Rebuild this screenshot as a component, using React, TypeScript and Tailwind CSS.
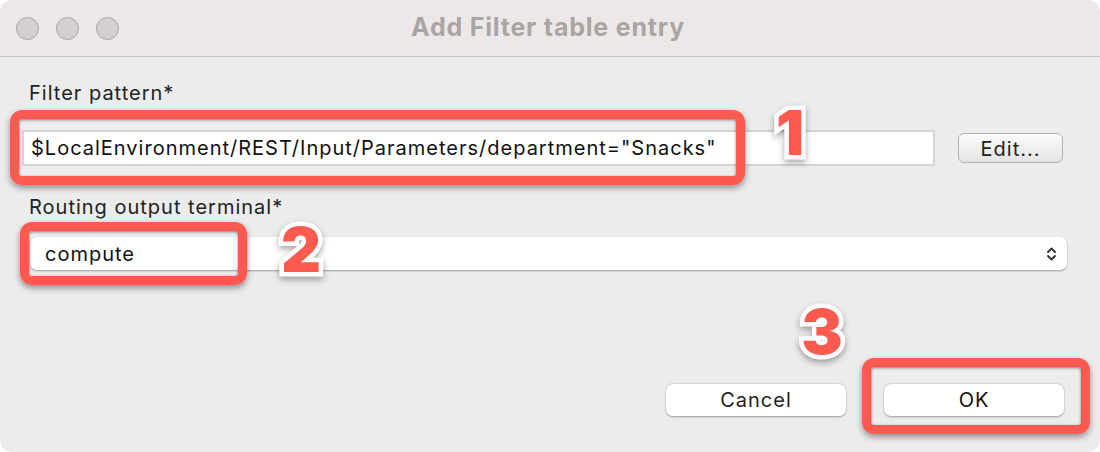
const red = "border-[#fe5a4f]";

function TrafficLight() {
  return <div className="h-[23px] w-[23px] rounded-full border border-[#aaa6a6] bg-[#d4d0d0]" />;
}

function Marker({ n, className }: { n: string; className: string }) {
  return (
    <div
      className={`absolute flex h-[60px] w-[60px] items-center justify-center font-['Inter',sans-serif] text-[62px] font-black leading-none tracking-normal text-[#fe5a4f] [-webkit-text-stroke:9px_white] [paint-order:stroke_fill] drop-shadow-[0_3px_3px_rgba(0,0,0,0.35)] ${className}`}
    >
      {n}
    </div>
  );
}

function Chevrons() {
  return (
    <svg width="11" height="16" viewBox="0 0 11 16" fill="none" stroke="#333" strokeWidth="1.9" strokeLinecap="round" strokeLinejoin="round">
      <path d="M2 6 L5.5 2.5 L9 6" />
      <path d="M2 10 L5.5 13.5 L9 10" />
    </svg>
  );
}

export default function App() {
  return (
    <div className="min-h-screen bg-white">
      <div className="relative flex h-[452px] w-[1100px] flex-col overflow-hidden rounded-[12px] bg-[#ececec] font-['Inter',sans-serif] text-[20px] tracking-[1px] text-[#222]">
        {/* title bar */}
        <div className="grid h-[57px] shrink-0 grid-cols-[1fr_auto_1fr] items-center border-b border-[#c8c5c5] bg-[#ede8e8]">
          <div className="flex gap-[17px] pl-[16px]">
            <TrafficLight />
            <TrafficLight />
            <TrafficLight />
          </div>
          <div className="pr-[4px] text-[25px] font-bold tracking-[0.8px] text-[#a9a5a5]">Add Filter table entry</div>
          <div />
        </div>

        {/* form */}
        <div className="flex flex-1 flex-col pb-[36px] pl-[22px] pr-[33px]">
          <div className="mt-[24px] pl-[7px] leading-[24px]">Filter pattern*</div>
          <div className="mt-[25px] flex items-center gap-[23px]">
            <div className="flex h-[36px] flex-1 items-center border-2 border-[#d4d4d4] bg-white pl-[7px] text-[#111]">
              $LocalEnvironment/REST/Input/Parameters/department="Snacks"
            </div>
            <button className="mr-[4px] h-[30px] w-[105px] rounded-[6px] border border-[#b3b3b3] bg-gradient-to-b from-[#fbfbfb] to-[#e4e4e4] text-[#222]">
              Edit...
            </button>
          </div>

          <div className="mt-[29px] pl-[7px] leading-[24px]">Routing output terminal*</div>
          <div className="ml-[8px] mt-[18px] flex h-[33px] items-center justify-between rounded-[7px] bg-white pl-[15px] pr-[10px] shadow-[0_1px_2px_rgba(0,0,0,0.35)]">
            <span className="text-[#111]">compute</span>
            <Chevrons />
          </div>

          <div className="mr-[3px] mt-auto flex justify-end gap-[38px]">
            <button className="h-[32px] w-[180px] rounded-[7px] bg-white text-[#222] shadow-[0_0.5px_2px_rgba(0,0,0,0.35)]">Cancel</button>
            <button className="h-[32px] w-[180px] rounded-[7px] bg-white text-[#111] shadow-[0_0.5px_2px_rgba(0,0,0,0.35)]">OK</button>
          </div>
        </div>

        {/* annotations */}
        <div className={`absolute left-[10px] top-[110px] h-[75px] w-[735px] rounded-[12px] border-[9px] ${red} shadow-[0_3px_6px_rgba(0,0,0,0.4),inset_0_1px_3px_rgba(0,0,0,0.5)]`} />
        <div className={`absolute left-[20px] top-[222px] h-[63px] w-[227px] rounded-[12px] border-[9px] ${red} shadow-[0_3px_6px_rgba(0,0,0,0.4),inset_0_1px_3px_rgba(0,0,0,0.5)]`} />
        <div className={`absolute left-[862px] top-[358px] h-[76px] w-[228px] rounded-[12px] border-[9px] ${red} shadow-[0_3px_6px_rgba(0,0,0,0.4),inset_0_1px_3px_rgba(0,0,0,0.5)]`} />
        <Marker n="1" className="left-[760px] top-[103px]" />
        <Marker n="2" className="left-[271px] top-[220px]" />
        <Marker n="3" className="left-[792px] top-[302px]" />
      </div>
    </div>
  );
}
